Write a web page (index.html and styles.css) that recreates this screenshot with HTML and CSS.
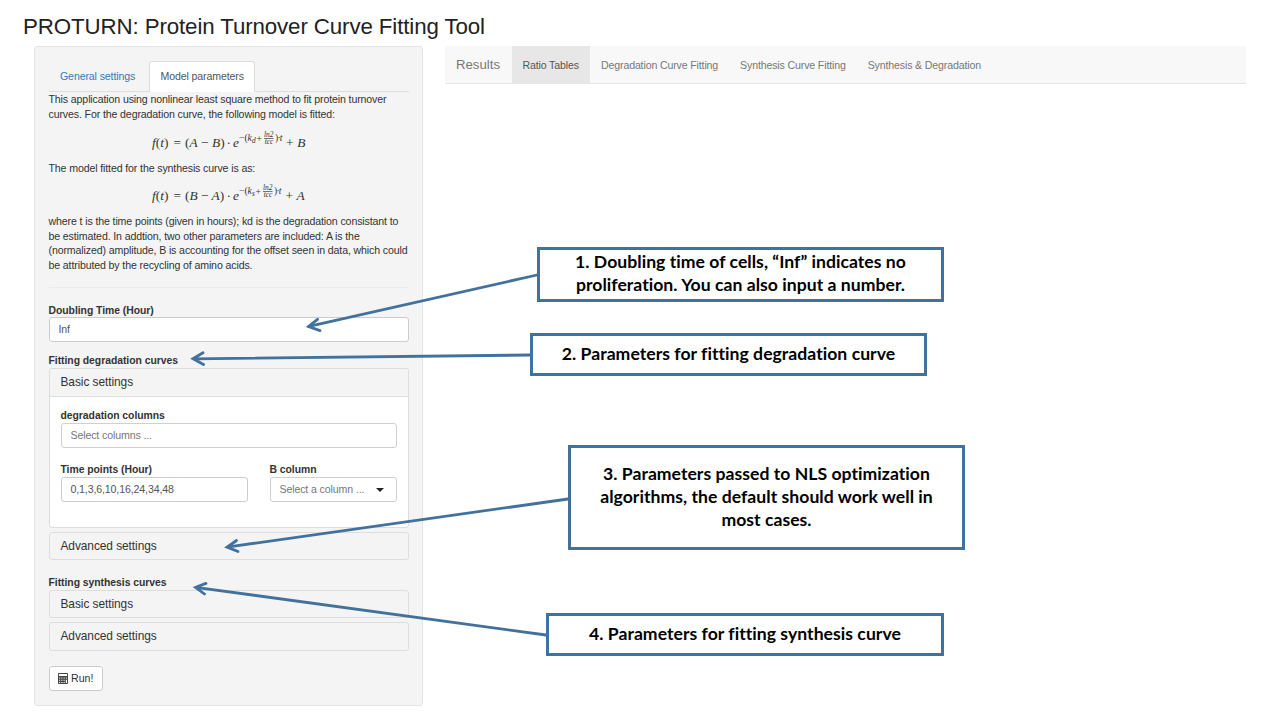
FILE: index.html
```html
<!DOCTYPE html>
<html lang="en">
<head>
<meta charset="utf-8">
<title>PROTURN</title>
<link rel="stylesheet" href="styles.css">
</head>
<body>
<div class="page">
  <h1 class="title"><span>PROTURN: Protein Turnover Curve Fitting Tool</span></h1>
  <div class="columns">
    <aside class="well">
      <nav class="tabs">
        <a class="tab">General settings</a>
        <a class="tab active">Model parameters</a>
      </nav>
      <p class="text">This application using nonlinear least square method to fit protein turnover<br>curves. For the degradation curve, the following model is fitted:</p>
      <div class="equation">
        <svg width="160" height="24" viewBox="150 129 160 24">
          <g class="math">
            <text x="152" y="146.5"><tspan class="it">f</tspan>(<tspan class="it">t</tspan>)</text>
            <text x="173.5" y="146.5">=</text>
            <text x="185" y="146.5">(<tspan class="it">A</tspan></text>
            <text x="201" y="146.5">−</text>
            <text x="212" y="146.5"><tspan class="it">B</tspan>)</text>
            <text x="226.5" y="146.5">·</text>
            <text x="233" y="146.5" class="it">e</text>
            <text x="286" y="146.5">+</text>
            <text x="297.3" y="146.5" class="it">B</text>
          </g>
          <g class="math sup">
            <text x="239" y="141">−(<tspan class="it">k</tspan></text>
            <text x="252" y="143" class="it tiny">d</text>
            <text x="256.5" y="141.5">+</text>
            <text x="275" y="141">)</text>
            <text x="277.6" y="141">·</text>
            <text x="279.8" y="141" class="it">t</text>
            <text x="264" y="136.5" class="it tiny">ln2</text>
            <text x="264.7" y="144.3" class="it tiny">tcc</text>
          </g>
          <path d="M264 138.5h9.5" class="bar"/>
        </svg>
      </div>
      <p class="text">The model fitted for the synthesis curve is as:</p>
      <div class="equation second">
        <svg width="160" height="24" viewBox="150 129 160 24">
          <g class="math">
            <text x="152" y="146.5"><tspan class="it">f</tspan>(<tspan class="it">t</tspan>)</text>
            <text x="173.5" y="146.5">=</text>
            <text x="185" y="146.5">(<tspan class="it">B</tspan></text>
            <text x="201" y="146.5">−</text>
            <text x="211.5" y="146.5"><tspan class="it">A</tspan>)</text>
            <text x="226.5" y="146.5">·</text>
            <text x="233" y="146.5" class="it">e</text>
            <text x="285.5" y="146.5">+</text>
            <text x="296.5" y="146.5" class="it">A</text>
          </g>
          <g class="math sup">
            <text x="239" y="141">−(<tspan class="it">k</tspan></text>
            <text x="252" y="143" class="it tiny">s</text>
            <text x="255.5" y="141.5">+</text>
            <text x="274" y="141">)</text>
            <text x="276.6" y="141">·</text>
            <text x="278.8" y="141" class="it">t</text>
            <text x="263" y="136.5" class="it tiny">ln2</text>
            <text x="263.7" y="144.3" class="it tiny">tcc</text>
          </g>
          <path d="M263 138.5h9.5" class="bar"/>
        </svg>
      </div>
      <p class="text">where t is the time points (given in hours); kd is the degradation consistant to<br>be estimated. In addtion, two other parameters are included: A is the<br>(normalized) amplitude, B is accounting for the offset seen in data, which could<br>be attributed by the recycling of amino acids.</p>
      <hr class="rule">
      <div class="label">Doubling Time (Hour)</div>
      <div class="input">Inf</div>
      <div class="label section">Fitting degradation curves</div>
      <section class="panel open">
        <div class="heading">Basic settings</div>
        <div class="panel-body">
          <div class="label">degradation columns</div>
          <div class="input placeholder">Select columns ...</div>
          <div class="row">
            <div class="times">
              <div class="label">Time points (Hour)</div>
              <div class="input">0,1,3,6,10,16,24,34,48</div>
            </div>
            <div class="bcol">
              <div class="label">B column</div>
              <div class="input placeholder select">Select a column ...<i class="caret"></i></div>
            </div>
          </div>
        </div>
      </section>
      <section class="panel"><div class="heading">Advanced settings</div></section>
      <div class="label synth">Fitting synthesis curves</div>
      <section class="panel"><div class="heading">Basic settings</div></section>
      <section class="panel"><div class="heading">Advanced settings</div></section>
      <button class="run">
        <svg width="10" height="11" viewBox="0 0 11 11" preserveAspectRatio="none">
          <path fill="#444" fill-rule="evenodd" d="M.8 0h9.4q.8 0 .8.8v9.4q0 .8-.8.8H.8Q0 11 0 10.2V.8Q0 0 .8 0zM1 1v2h9V1zM1.1 4.4v1h1.3v-1zM3.6 4.4v1h1.3v-1zM6.1 4.4v1h1.3v-1zM8.6 4.4v1h1.3v-1zM1.1 6.7v1h1.3v-1zM3.6 6.7v1h1.3v-1zM6.1 6.7v1h1.3v-1zM1.1 9v1h1.3V9zM3.6 9v1h1.3V9zM6.1 9v1h1.3V9zM8.6 6.7V10h1.3V6.7z"/>
        </svg>
        <span>Run!</span>
      </button>
    </aside>
    <nav class="navbar">
      <span class="brand">Results</span>
      <a class="nav-item current">Ratio Tables</a>
      <a class="nav-item">Degradation Curve Fitting</a>
      <a class="nav-item">Synthesis Curve Fitting</a>
      <a class="nav-item">Synthesis &amp; Degradation</a>
    </nav>
  </div>
  <svg class="arrows" width="1280" height="720" viewBox="0 0 1280 720">
    <path d="M537 275L309 326.4M317.5 319.3L308.5 326.5L320 330.6"/>
    <path d="M530 355L193 358.8M203 352.8L193 358.8L203.5 364.5"/>
    <path d="M568 499L227 547.1M236.5 540.5L227 547.1L238 551.5"/>
    <path d="M546 635L195.500 587.3M206 583.4L195.500 587.3L204.500 594"/>
  </svg>
  <div class="note n1"><span>1. Doubling time of cells, “Inf” indicates no<br>proliferation. You can also input a number.</span></div>
  <div class="note n2"><span>2. Parameters for fitting degradation curve</span></div>
  <div class="note n3"><span>3. Parameters passed to NLS optimization<br>algorithms, the default should work well in<br>most cases.</span></div>
  <div class="note n4"><span>4. Parameters for fitting synthesis curve</span></div>
</div>
</body>
</html>
```
FILE: styles.css
```css
* { box-sizing: border-box; }
body { margin: 0; background: #fff; color: #333; font: 10.6px/14.7px "Liberation Sans", Arial, sans-serif; letter-spacing: -.125px; }
.page { position: relative; width: 1280px; height: 720px; overflow: hidden; white-space: nowrap; }
.title { margin: 0; padding: 14px 0 0 23px; height: 46px; font-size: 22.3px; line-height: 26px; font-weight: 400; color: #222; letter-spacing: -.11px; }
.columns { display: flex; align-items: flex-start; gap: 22px; padding-left: 34px; }
.well { width: 389px; height: 659.5px; padding: 14px 13.500px 0 13.5px; background: #f4f4f4; border: 1px solid #e4e4e4; border-radius: 3px; }
.tabs { display: flex; height: 31px; border-bottom: 1px solid #ddd; }
.tab { width: 100px; height: 31px; padding: 0 11.500px; line-height: 31px; color: #337ab7; }
.tab.active { width: 106.500px; padding: 0 11px; color: #555; background: #fff; border: 1px solid #ddd; border-bottom-color: #fff; border-radius: 3px 3px 0 0; line-height: 29px; }
.text { margin: 0; padding-top: .3px; margin-bottom: -.3px; }
.equation { height: 39.2px; padding: 7.600px 0 0 101px; }
.equation.second { height: 38.4px; padding-top: 7.200px; }
.equation svg { display: block; }
.math { font: 13.4px "Liberation Serif", serif; fill: #333; letter-spacing: 0; }
.math.sup { font-size: 9.600px; }
.it { font-style: italic; }
.math .tiny { font-size: 7.400px; }
.bar { stroke: #555; stroke-width: .8; }
.rule { height: 1px; margin: 14.5px 0 14.7px; border: 0; background: #ececec; }
.label { font-weight: 700; font-size: 10.4px; height: 14.7px; line-height: 16px; letter-spacing: -.04px; }
.input { height: 25px; padding: 0 9px; line-height: 23.500px; color: #555; background: #fff; border: 1px solid #ccc; border-radius: 3px; }
.placeholder { color: #777; border-color: #d0d0d0; }
.panel .input { line-height: 23px; }
.section { margin-top: 11px; }
.panel { height: 28.600px; margin-bottom: 3.800px; border: 1px solid #ddd; border-radius: 3px; }
.panel.open { height: 159.500px; background: #fff; margin-bottom: 4px; }
.heading { height: 27px; padding-left: 11px; line-height: 27px; font-size: 11.9px; letter-spacing: -.06px; }
.open .heading { height: 28px; background: #f4f4f4; border-bottom: 1px solid #ddd; border-radius: 3px 3px 0 0; }
.panel-body { padding: 11px 11px 0; }
.row { display: flex; justify-content: space-between; margin-top: 14.700px; }
.times { width: 187.500px; }
.bcol { width: 127px; }
.select { display: flex; justify-content: space-between; align-items: center; padding-right: 12px; }
.caret { border: 4px solid transparent; border-top: 4.500px solid #222; border-bottom: 0; }
.synth { margin-top: 15px; }
.run { display: flex; align-items: center; gap: 3.500px; width: 54px; height: 25px; margin: 15.500px 0 0; padding: 0 8px; color: #333; background: #fff; border: 1px solid #ccc; border-radius: 3px; font: inherit; }
.navbar { display: flex; width: 801px; height: 38px; background: #f8f8f8; border-bottom: 1px solid #e7e7e7; line-height: 38px; color: #777; }
.brand { width: 66.500px; padding-left: 11px; font-size: 13.2px; letter-spacing: 0; }
.nav-item { padding: 0 11px; letter-spacing: -.145px; }
.nav-item.current { width: 78.500px; background: #e7e7e7; color: #555; }
.arrows { position: absolute; left: 0; top: 0; fill: none; stroke: #41719c; stroke-width: 2.8; stroke-linecap: round; stroke-linejoin: miter; }
.note { position: absolute; display: flex; justify-content: center; text-align: center; border: 3px solid #41719c; background: #fff; color: #000; font: 700 17.600px/23px Lato, sans-serif; letter-spacing: .03px; font-variant-ligatures: none; }
.n1 { left: 537px; top: 247px; width: 407px; height: 55px; padding-top: 0; }
.n2 { left: 530px; top: 333px; width: 397px; height: 43px; padding-top: 6px; }
.n3 { left: 568px; top: 445px; width: 397px; height: 105px; padding-top: 14px; }
.n4 { left: 546px; top: 613px; width: 398px; height: 43px; padding-top: 6px; }
```
